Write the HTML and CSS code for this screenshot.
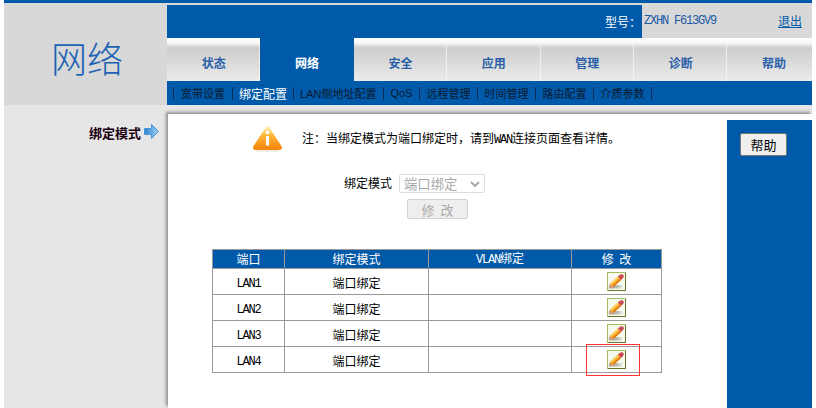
FILE: index.html
```html
<!DOCTYPE html>
<html lang="zh-CN">
<head>
<meta charset="utf-8">
<title>网络</title>
<link rel="stylesheet" href="styles.css">
</head>
<body>
<svg class="defs" width="0" height="0" aria-hidden="true">
  <defs>
    <linearGradient id="warn" x1="0" y1="0" x2="0" y2="1">
      <stop offset="0" stop-color="#fde5a0"/>
      <stop offset=".35" stop-color="#fdb63a"/>
      <stop offset="1" stop-color="#f58a12"/>
    </linearGradient>
    <linearGradient id="arrow" x1="0" y1="0" x2="1" y2="0">
      <stop offset="0" stop-color="#2a7fd0"/>
      <stop offset="1" stop-color="#a4d4f6"/>
    </linearGradient>
    <linearGradient id="shade" x1="0" y1="0" x2="1" y2="0">
      <stop offset="0" stop-color="#a8958c"/>
      <stop offset=".6" stop-color="#b9bdb0"/>
      <stop offset="1" stop-color="#eef2e8"/>
    </linearGradient>
    <symbol id="pencil" viewBox="0 0 19 19">
      <rect x=".5" y=".5" width="18" height="18" fill="#f5faee" stroke="#a3bb5c"/>
      <path d="M18.500 1v17.500H1" fill="none" stroke="#67762a"/>
      <rect x="2" y="13" width="14" height="3.500" fill="url(#shade)"/>
      <path d="M2.500 15.500 3.400 11.300 10.900 4.600 14.100 8 6.600 14.700Z" fill="#f9a31f"/>
      <path d="M3.400 11.300 10.900 4.600 12 5.800 4.600 12.500Z" fill="#fdd66a"/>
      <path d="M5.700 13.800 13.200 7 14.100 8 6.600 14.700Z" fill="#d9791a"/>
      <path d="M2.500 15.500 3.300 12 6 14.900Z" fill="#d8a088"/>
      <path d="M10.900 4.600 13 2.700a2.200 2.200 0 0 1 3.200 3.100L14.100 8Z" fill="#c9484f"/>
      <path d="M13.400 2.600a1.600 1.600 0 0 1 1.800 0L14 3.800Z" fill="#e8a0a0"/>
    </symbol>
  </defs>
</svg>
<div class="page">
  <div class="topline"></div>
  <header class="header">
    <div class="logo">网络</div>
    <div class="head-main">
      <div class="info">
        <div class="model-label">型号&#xFF1A;</div>
        <div class="model-value"><span class="mono model-text">ZXHN F613GV9</span><a class="logout" href="#">退出</a></div>
      </div>
      <nav class="tabs">
        <a class="tab" href="#">状态</a>
        <a class="tab tab-active" href="#">网络</a>
        <a class="tab" href="#">安全</a>
        <a class="tab" href="#">应用</a>
        <a class="tab" href="#">管理</a>
        <a class="tab" href="#">诊断</a>
        <a class="tab" href="#">帮助</a>
      </nav>
      <nav class="subnav">
        <span class="sep"></span><a class="sub" href="#">宽带设置</a>
        <span class="sep"></span><a class="sub sub-active" href="#">绑定配置</a>
        <span class="sep"></span><a class="sub" href="#">LAN侧地址配置</a>
        <span class="sep"></span><a class="sub" href="#">QoS</a>
        <span class="sep"></span><a class="sub" href="#">远程管理</a>
        <span class="sep"></span><a class="sub" href="#">时间管理</a>
        <span class="sep"></span><a class="sub" href="#">路由配置</a>
        <span class="sep"></span><a class="sub" href="#">介质参数</a>
        <span class="sep"></span>
      </nav>
    </div>
  </header>
  <main class="main">
    <aside class="side">
      <span class="side-label">绑定模式</span>
      <svg class="side-arrow" width="15" height="15" viewBox="0 0 15 15"><path d="M.5 4.500H7.500V.5L14.500 7.500 7.500 14.500V10.500H.5Z" fill="url(#arrow)" stroke="#4d94d8"/></svg>
    </aside>
    <section class="panel">
      <div class="content">
        <div class="notice">
          <svg class="warn-icon" width="29" height="26" viewBox="0 0 29 26">
            <path d="M14.500 3 26.500 21.500H2.500Z" fill="url(#warn)" stroke="url(#warn)" stroke-width="5" stroke-linejoin="round"/>
            <path d="M3 25h23" stroke="#e8dcc8" stroke-width="1"/>
            <rect x="13" y="5" width="3" height="3" fill="#fff"/>
            <rect x="13" y="10" width="3" height="9.500" fill="#fff"/>
          </svg>
          <p class="notice-text">注&#xFF1A;当绑定模式为端口绑定时&#xFF0C;请到<span class="mono">WAN</span>连接页面查看详情。</p>
        </div>
        <div class="form-row">
          <label class="form-label" for="mode">绑定模式</label>
          <span class="select-wrap">
            <select class="form-select" id="mode" disabled><option>端口绑定</option></select>
            <svg class="chevron" width="10" height="6" viewBox="0 0 10 6"><path d="M1 1 5 5 9 1" fill="none" stroke="#a8a8a8" stroke-width="2"/></svg>
          </span>
        </div>
        <button class="btn-edit" disabled>修 改</button>
        <table class="grid">
          <colgroup><col class="c1"><col class="c2"><col class="c3"><col class="c4"></colgroup>
          <thead>
            <tr><th>端口</th><th>绑定模式</th><th><span class="mono">VLAN</span>绑定</th><th class="th-edit">修 改</th></tr>
          </thead>
          <tbody>
            <tr><td><span class="mono">LAN1</span></td><td>端口绑定</td><td></td><td class="icon-cell"><svg class="pencil" width="19" height="19"><use href="#pencil"/></svg></td></tr>
            <tr><td><span class="mono">LAN2</span></td><td>端口绑定</td><td></td><td class="icon-cell"><svg class="pencil" width="19" height="19"><use href="#pencil"/></svg></td></tr>
            <tr><td><span class="mono">LAN3</span></td><td>端口绑定</td><td></td><td class="icon-cell"><svg class="pencil" width="19" height="19"><use href="#pencil"/></svg></td></tr>
            <tr><td><span class="mono">LAN4</span></td><td>端口绑定</td><td></td><td class="icon-cell"><svg class="pencil" width="19" height="19"><use href="#pencil"/></svg><span class="highlight"></span></td></tr>
          </tbody>
        </table>
      </div>
      <div class="help-col"><button class="btn-help">帮助</button></div>
    </section>
  </main>
</div>
</body>
</html>
```

FILE: styles.css
```css
* { box-sizing: border-box; }
html, body { margin: 0; padding: 0; height: 408px; overflow: hidden; background: #fff; }
body { font: 12px/1.2 "Noto Sans CJK SC", sans-serif; color: #000; }
a { text-decoration: none; color: inherit; }
p { margin: 0; }
.defs { position: absolute; }
.mono { font-family: "Liberation Mono", monospace; font-size: 12px; letter-spacing: -1.200px; }

.page { width: 808px; margin-left: 4px; }
.topline { height: 3px; background: #0059a9; }

.header { display: flex; height: 102px; background: #d8d8d8; }
.logo { width: 163px; padding: 32px 0 0 47px; font-size: 36px; line-height: 44px; font-weight: 300; color: #1c62b4; white-space: nowrap; }
.head-main { flex: 1; min-width: 0; display: flex; flex-direction: column; padding-top: 2px; overflow: hidden; }

.info { display: flex; height: 33px; }
.model-label { width: 475px; background: #0059a9; color: #fff; font-size: 12px; line-height: 33px; padding-left: 438px; }
.model-value { flex: 1; display: flex; justify-content: space-between; align-items: center; padding: 0 10px 0 2px; }
.model-text { color: #1c5aa6; }
.logout { color: #0059a9; text-decoration: underline; font-size: 12px; }

.tabs { display: flex; height: 43px; }
.tab {
  flex: none; width: 93.400px; display: flex; align-items: center; justify-content: center; padding-top: 7px;
  font-weight: 700; color: #2a5fa8;
  background: linear-gradient(#fff 0, #f6f6f6 5px, #cdcdcd 10px, #ebebeb 100%);
  box-shadow: inset -1px 0 1px rgba(255,255,255,.6);
}
.tab-active { background: #0059a9; color: #fff; box-shadow: none; }

.subnav { display: flex; align-items: center; height: 24px; background: #0059a9; padding-left: 6px; color: #0a1a30; font: 11px "Liberation Sans", "Noto Sans CJK SC", sans-serif; }
.sep { flex: none; width: 1px; height: 13px; margin-right: 6px; background: #0b2f5c; }
.sep:first-child { margin-right: 7px; }
.sub { margin-right: 7px; white-space: nowrap; }
.sub-active { color: #fff; font-size: 12px; margin-right: 6px; }

.main { display: flex; height: 303px; background: #e6e6e6; padding-top: 9px; overflow: hidden; }
.side { width: 164px; display: flex; justify-content: flex-end; align-items: flex-start; padding-right: 5px; }
.side-label { font-size: 13px; font-weight: 700; color: #1a0010; margin-top: 11px; margin-right: 3px; white-space: nowrap; }
.side-arrow { flex: none; margin-top: 10px; margin-right: 4px; }

.panel { flex: 1; display: flex; background: #fff; box-shadow: -2px -2px 3px #8f8f8f; }
.content { width: 559px; padding-top: 12px; }
.notice { display: flex; align-items: center; height: 25px; padding-left: 85px; }
.notice-text { margin-left: 20px; padding-top: 2px; white-space: nowrap; text-spacing-trim: space-all; }
.warn-icon { flex: none; }

.form-row { display: flex; align-items: center; margin: 23px 0 0 176px; height: 19px; }
.form-label { margin-right: 7px; }
.select-wrap { position: relative; display: block; width: 86px; height: 19px; }
.form-select { appearance: none; display: block; width: 86px; height: 19px; padding: 0 0 0 4px; font: 13.330px/17px "Noto Sans CJK SC", sans-serif; color: #aaa; background: #fff; border: 1px solid #ddd; border-radius: 2px; opacity: 1; }
.chevron { position: absolute; right: 5px; top: 7px; }
.btn-edit { display: block; width: 61px; height: 20px; margin: 6px 0 0 239px; padding: 0; font: 13px "Noto Sans CJK SC", sans-serif; word-spacing: 3px; color: #aaa; background: #eee; border: 1px solid #d2d2d2; border-radius: 2px; }

.grid { width: 449px; margin: 30px 0 0 44px; border-collapse: collapse; table-layout: fixed; }
.c1 { width: 72px; }
.c2 { width: 144px; }
.c3 { width: 143px; }
.c4 { width: 90px; }
.grid th, .grid td { border: 1px solid #999; padding: 0; text-align: center; vertical-align: middle; font-weight: 400; }
.grid th { height: 19px; background: #0059a9; color: #fff; }
.grid td { height: 26px; padding-top: 3px; }
.grid .icon-cell { padding-top: 0; }
.th-edit { word-spacing: 3px; }
.icon-cell { position: relative; }
.pencil { display: block; margin: 0 auto; }
.highlight { position: absolute; left: 14px; top: -3px; width: 54px; height: 32px; border: 1px solid #f33; }

.help-col { flex: 1; margin-top: 6px; background: #0059a9; padding: 13px 0 0 13px; }
.btn-help { display: block; width: 47px; height: 23px; padding: 0; font: 13px "Noto Sans CJK SC", sans-serif; color: #000; background: #efefef; border: 1px solid #767676; border-radius: 2px; }
```
